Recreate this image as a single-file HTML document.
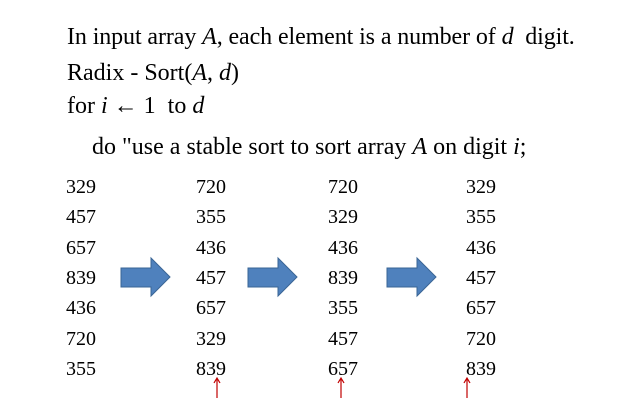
<!DOCTYPE html><html><head><style>
body{margin:0;width:638px;height:410px;background:#fff;position:relative;overflow:hidden;font-family:"Liberation Serif",serif;color:#000}
.t{position:absolute;left:67px;font-size:24px;white-space:nowrap;line-height:1}
.n{position:absolute;font-size:20px;line-height:1}
i{font-style:italic}
</style></head><body>
<div class="t" style="top:25px;letter-spacing:-0.1px">In input array <i>A</i>, each element is a number of <i>d</i>&nbsp; digit.</div>
<div class="t" style="top:61px">Radix - Sort(<i>A</i>, <i>d</i>)</div>
<div class="t" style="top:94px">for <i>i</i> ← 1&nbsp; to <i>d</i></div>
<div class="t" style="top:135px;left:92px">do "use a stable sort to sort array <i>A</i> on digit <i>i</i>;</div>
<div id="c"></div>
<svg width="638" height="410" style="position:absolute;left:0;top:0">
<g fill="#4f81bd" stroke="#3a6595" stroke-width="1">
<path d="M121 268H151V258L170 277L151 296V287H121Z"/>
<path d="M248 268H278V258L297 277L278 296V287H248Z"/>
<path d="M387 268H417V258L436 277L417 296V287H387Z"/>
</g>
<g stroke="#c00000" fill="none" stroke-width="1.2">
<path d="M217 398V379M214 383L217 378L220 383"/>
<path d="M341 398V379M338 383L341 378L344 383"/>
<path d="M467 398V379M464 383L467 378L470 383"/>
</g>
</svg>
<script>
var cols=[[66,["329","457","657","839","436","720","355"]],[196,["720","355","436","457","657","329","839"]],[328,["720","329","436","839","355","457","657"]],[466,["329","355","436","457","657","720","839"]]];
var h="";cols.forEach(function(c){c[1].forEach(function(v,i){h+='<div class="n" style="left:'+c[0]+'px;top:'+(177+i*30.3)+'px">'+v+'</div>';});});
document.getElementById("c").innerHTML=h;
</script>
</body></html>
